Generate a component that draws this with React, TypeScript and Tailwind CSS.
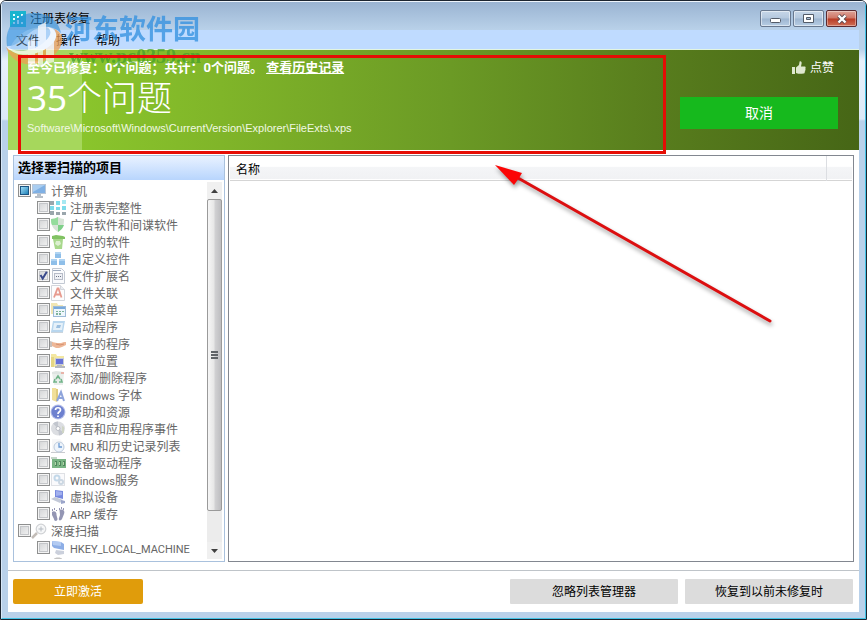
import type { ReactNode } from "react";

const uiFont = "font-['Roboto','Noto_Sans_CJK_SC',sans-serif]";

type Entry = { label: string; icon: ReactNode; checked?: boolean };

function Icon({ children }: { children: ReactNode }) {
  return (
    <svg viewBox="0 0 16 16" className="size-4 shrink-0" aria-hidden="true">
      {children}
    </svg>
  );
}

const computer = (
  <Icon>
    <rect x="1" y="1" width="14" height="10" fill="#b9c6d6" />
    <rect x="2" y="2" width="12" height="8" fill="#7fb0e4" />
    <path d="M2 2h12L2 9z" fill="#a9cdf0" />
    <path d="M6 11h4v2h2v2H4v-2h2z" fill="#b7bfc8" />
  </Icon>
);

const entries: Entry[] = [
  {
    label: "注册表完整性",
    icon: (
      <Icon>
        <path d="M0 1h4v4H0zM0 11h4v4H0zM6 12h4v3H6zM12 12h4v3h-4z" fill="#9aa6ac" />
        <path d="M6 1h4v4H6zM0 6h4v4H0zM6 7h4v3H6zM12 6h4v4h-4z" fill="#7edbea" />
        <path d="M12 0h4v4h-4z" fill="#a6e8f2" />
      </Icon>
    ),
  },
  {
    label: "广告软件和间谍软件",
    icon: (
      <Icon>
        <path d="M1 2c3 0 5-1 7-2 2 1 4 2 6 2 0 6-1 10-6 13C3 12 1 8 1 2z" fill="#d7e3d7" />
        <path d="M8 0C6 1 4 2 1 2c0 2 0 4 1 6h6z" fill="#94dc9c" />
        <path d="M8 8h6c-1 3-3 5-6 7z" fill="#7fd089" />
      </Icon>
    ),
  },
  {
    label: "过时的软件",
    icon: (
      <Icon>
        <path d="M3 5h10l-1 10H5z" fill="#a8d88c" />
        <path d="M2 2l4-1 7 1 2 1v2H2z" fill="#81c263" />
        <path d="M6 7h4l1 3-3 2-3-2z" fill="#dcefd0" />
      </Icon>
    ),
  },
  {
    label: "自定义控件",
    icon: (
      <Icon>
        <path d="M5 1h6v6H5zM1 8h6v6H1zM9 8h6v6H9z" fill="#8fbfe9" />
        <path d="M5 1h6v2H5zM1 8h6v2H1zM9 8h6v2H9z" fill="#b0d4f2" />
      </Icon>
    ),
  },
  {
    label: "文件扩展名",
    checked: true,
    icon: (
      <Icon>
        <path d="M2.500 .5h9l3 3v12h-12z" fill="#fafbfd" stroke="#c3c9d3" />
        <path d="M3 2h8v1H3z" fill="#9daabd" />
        <rect x="4.500" y="5.500" width="8" height="6" fill="#eef0f5" stroke="#b7bcc8" />
        <path d="M6 8h1v1H6zM8 8h1v1H8zM10 8h1v1h-1z" fill="#6c7484" />
      </Icon>
    ),
  },
  {
    label: "文件关联",
    icon: (
      <Icon>
        <path d="M1.500 .5h9l4 4v11h-13z" fill="#fdfdfd" stroke="#d3d6dc" />
        <path d="M10.500 .5v4h4" fill="#e9ecf1" stroke="#d3d6dc" />
        <path d="M4 12.500l3.500-9h1l3 9M5.500 9.500h5" fill="none" stroke="#e79a8e" strokeWidth="1.800" />
      </Icon>
    ),
  },
  {
    label: "开始菜单",
    icon: (
      <Icon>
        <path d="M1 1h6l1 2h5v9H1z" fill="#f1e6b4" />
        <rect x="3.500" y="4.500" width="12" height="10" fill="#eef6fc" stroke="#9dbbd8" />
        <path d="M4 5h11v2H4z" fill="#78a9dd" />
        <path d="M6 9h2v1H6zM9 9h2v1H9zM12 9h2v1h-2zM6 11h2v2H6zM9 11h2v2H9z" fill="#7eb39b" />
      </Icon>
    ),
  },
  {
    label: "启动程序",
    icon: (
      <Icon>
        <path d="M3 2h12l-2 11H1z" fill="#b8d6ee" />
        <path d="M4 4h9l-1 7H3z" fill="#e6f1f9" />
        <path d="M7 6h4l-1 3H6z" fill="#9dc0e0" />
        <path d="M1 13h12v1H1z" fill="#cbd4dc" />
      </Icon>
    ),
  },
  {
    label: "共享的程序",
    icon: (
      <Icon>
        <path d="M0 5l3 1-1 5H0z" fill="#c8c0bc" />
        <path d="M2 6l5 1 4 0 3-1 2 0v3l-4 2-3 1H6L2 10z" fill="#eeb797" />
        <path d="M6 8l4 1 4-1" fill="none" stroke="#d59070" />
      </Icon>
    ),
  },
  {
    label: "软件位置",
    icon: (
      <Icon>
        <path d="M1 1h5l1 2h7v11H1z" fill="#f3e7a2" />
        <path d="M1 4h3v10H1z" fill="#e5d684" />
        <rect x="5.500" y="5.500" width="8" height="6" fill="#6873d8" stroke="#c9ccd6" />
        <path d="M7 12h5v1h3v2H5v-2h2z" fill="#b5b8c0" />
      </Icon>
    ),
  },
  {
    label: "添加/删除程序",
    icon: (
      <Icon>
        <path d="M2 3h12l-1 12H4z" fill="#e9eeeb" />
        <path d="M2 2l4-1 8 1v2H2z" fill="#dfe5e2" />
        <path d="M6 9l2-3 2 3M11 9l1 3H9M7 12H4l1-3" fill="none" stroke="#71b489" strokeWidth="1.600" />
        <path d="M11 2h3v2h-3z" fill="#e9b3a9" />
      </Icon>
    ),
  },
  {
    label: "Windows 字体",
    icon: (
      <Icon>
        <path d="M2 1h4l1 2v12l-5-2z" fill="#f1df99" />
        <path d="M6 2h2v10l-2 3z" fill="#e0cb7c" />
        <path d="M7 14L11 5l3 9M9 11h4" fill="none" stroke="#8ea4db" strokeWidth="2" />
      </Icon>
    ),
  },
  {
    label: "帮助和资源",
    icon: (
      <Icon>
        <circle cx="8" cy="8" r="7.500" fill="#b9c2ea" />
        <circle cx="8" cy="8" r="6.500" fill="#6d80cf" />
        <path d="M5.500 6c0-3 5-3 5 0 0 2-2.500 1.500-2.500 4M8 11.500v1.500" fill="none" stroke="#fff" strokeWidth="1.700" />
      </Icon>
    ),
  },
  {
    label: "声音和应用程序事件",
    icon: (
      <Icon>
        <circle cx="8" cy="7.500" r="7" fill="#dcdee2" />
        <path d="M8 7.500L3 2.500a7 7 0 0 1 5-2zM8 7.500l6 4a7 7 0 0 1-5 3z" fill="#c2c6ce" />
        <circle cx="8" cy="7.500" r="2" fill="#fff" stroke="#b9bcc4" />
        <path d="M12 5v7h2V6z" fill="#cfd5c5" />
      </Icon>
    ),
  },
  {
    label: "MRU 和历史记录列表",
    icon: (
      <Icon>
        <path d="M2 1h8l3 3v11H2z" fill="#f7f7f8" />
        <path d="M1 14.500h14" stroke="#c9cbcf" />
        <circle cx="9" cy="9" r="5" fill="#eef4fb" stroke="#bdcbdc" />
        <path d="M9 5v4h3" fill="none" stroke="#6c9bd4" strokeWidth="1.300" />
      </Icon>
    ),
  },
  {
    label: "设备驱动程序",
    icon: (
      <Icon>
        <path d="M1 2h6v2H1z" fill="#c5d4c9" />
        <path d="M2 4h14v9H2z" fill="#79b584" />
        <path d="M5 6h2v5H5zM9 6h2v5H9zM13 6h2v5h-2z" fill="#4e865c" />
        <path d="M5 7h1v3H5zM9 7h1v3H9zM13 7h1v3h-1z" fill="#b3d5a9" />
      </Icon>
    ),
  },
  {
    label: "Windows服务",
    icon: (
      <Icon>
        <rect x="1.500" y="1.500" width="13" height="12" fill="#fafafc" stroke="#dfe1e5" />
        <circle cx="7" cy="6" r="2.500" fill="none" stroke="#c3d8e9" strokeWidth="2" />
        <circle cx="11" cy="10" r="2" fill="none" stroke="#cbd7e2" strokeWidth="2" />
      </Icon>
    ),
  },
  {
    label: "虚拟设备",
    icon: (
      <Icon>
        <path d="M5 1l8 1v8l-8-2z" fill="#7789df" />
        <path d="M6 2l6 1v3L6 7z" fill="#a2b0ee" />
        <path d="M1 10l4-2 8 3-3 3z" fill="#c3c9d8" />
        <path d="M11 11l4 1v2l-4 1z" fill="#9ba5ca" />
      </Icon>
    ),
  },
  {
    label: "ARP 缓存",
    icon: (
      <Icon>
        <path d="M2 6c2-2 5 0 4.500 3l1 4c0 2.500-3.500 2.500-3.500 0L2 9zM9.500 4c3-1.500 6 1 4.500 4l-2 5c-1 2-4 2-3-1l1-3z" fill="#9496b4" />
        <path d="M2 3h1v2H2zM4 2h1v2H4zM6 4h1v1H6zM9 2h1v2H9zM11 1h1v2h-1zM13 2h1v2h-1z" fill="#9496b4" />
      </Icon>
    ),
  },
];

const magnifier = (
  <Icon>
    <path d="M6 10l-5 5" stroke="#c3bdb8" strokeWidth="2.500" />
    <circle cx="10" cy="6" r="4.800" fill="#f6f7f8" stroke="#d0d2d5" strokeWidth="1.200" />
    <path d="M10 3.500v5M7.500 6h5" stroke="#b4bac1" />
  </Icon>
);

const registry = (
  <Icon>
    <path d="M2 1l9 1 3 2v6L4 8 2 6z" fill="#8daee6" />
    <path d="M2 1l9 1v4L3 5z" fill="#b3cbf2" />
    <path d="M6 10l8 1v3l-6 1-3-2z" fill="#cbd0dc" />
  </Icon>
);

const boxClass =
  "size-[13px] shrink-0 appearance-none border border-[#8e8f8f] bg-[linear-gradient(135deg,#cfd1d3,#f6f6f6)] shadow-[inset_0_0_0_1px_#f4f4f4,inset_0_0_0_2px_#c4c6c9]";

/* Latin runs are set one size below the Chinese text around them. */
function MixedText({ text }: { text: string }) {
  return text
    .split(/([A-Za-z_]+)/)
    .filter(Boolean)
    .map((run) =>
      /^[A-Za-z_]/.test(run) ? (
        <span key={run} className="text-[11px]">
          {run}
        </span>
      ) : (
        run
      ),
    );
}

function TreeRow({ label, icon, checked, root, mixed }: Entry & { root?: boolean; mixed?: boolean }) {
  return (
    <li className={root ? "flex h-[17px] items-center" : "flex h-[17px] items-center pl-[19px]"}>
      <label className="flex items-center whitespace-nowrap">
        <span className="grid">
          <input type="checkbox" defaultChecked={checked} className={`${boxClass} col-start-1 row-start-1`} />
          {checked && (
            <svg viewBox="0 0 13 13" className="pointer-events-none col-start-1 row-start-1 size-[13px]" aria-hidden="true">
              <path d="M3.500 6l2.200 3.500L9.800 2.800" fill="none" stroke="#3a4a8c" strokeWidth="2" />
            </svg>
          )}
          {mixed && (
            <span className="pointer-events-none col-start-1 row-start-1 m-[2px] border border-[#1c5583] bg-linear-to-br from-[#9bdcf6] to-[#1583b8]" />
          )}
        </span>
        {icon}
        <span className="pt-1 pl-1">
          <MixedText text={label} />
        </span>
      </label>
    </li>
  );
}

function ScrollArrow({ up }: { up?: boolean }) {
  return (
    <button
      type="button"
      aria-label={up ? "向上滚动" : "向下滚动"}
      className="flex h-[17px] shrink-0 items-center justify-center bg-[#f0f0f0]"
    >
      <svg viewBox="0 0 7 4" className="h-1 w-[7px]" aria-hidden="true">
        <path d={up ? "M0 4L3.500 0 7 4z" : "M0 0h7L3.500 4z"} fill="#404040" />
      </svg>
    </button>
  );
}

function WindowButton({ label, close, children }: { label: string; close?: boolean; children: ReactNode }) {
  return (
    <button
      type="button"
      aria-label={label}
      className={
        close
          ? "flex h-[17px] w-[31px] items-center justify-center rounded-[2px] border border-[#5b2a30] bg-[linear-gradient(#dda398,#cf7565_48%,#b83a24_52%,#cf6f55)] shadow-[inset_0_0_0_1px_#ffffff60]"
          : "flex h-[17px] w-[31px] items-center justify-center rounded-[2px] border border-[#68788f] bg-[linear-gradient(#c6d6e8,#b4c8de_48%,#9db5d0_52%,#b7cde4)] shadow-[inset_0_0_0_1px_#ffffff80]"
      }
    >
      {children}
    </button>
  );
}

function TitleBar() {
  return (
    <header className="flex h-7 items-start justify-between bg-linear-to-b from-[#9ab4d2] to-[#b9d1e9] pr-2 pl-2">
      <div className="flex items-center gap-1 pt-2">
        <svg viewBox="0 0 16 16" className="size-4" aria-hidden="true">
          <rect width="16" height="16" fill="#19b4cf" />
          <path d="M3 3h2v2H3zM3 7h2v2H3zM3 11h2v2H3zM7 5h2v2H7zM7 9h2v4H7zM11 11h2v2h-2zM11 3h2v2h-2z" fill="#e4fbff" />
        </svg>
        <h1 className="text-[12px] leading-[18px]">注册表修复</h1>
      </div>
      <div className="flex gap-[2px] pt-2">
        <WindowButton label="最小化">
          <svg viewBox="0 0 11 5" className="mt-1 h-[5px] w-[11px]" aria-hidden="true">
            <rect x=".5" y=".5" width="10" height="4" rx="1" fill="#fff" stroke="#535b68" />
          </svg>
        </WindowButton>
        <WindowButton label="最大化">
          <svg viewBox="0 0 11 9" className="h-[9px] w-[11px]" aria-hidden="true">
            <path d="M.5.5h10v8H.5zM3.500 3.500h4v2h-4z" fill="#fff" fillRule="evenodd" stroke="#535b68" />
          </svg>
        </WindowButton>
        <WindowButton label="关闭" close>
          <svg viewBox="0 0 12 10" className="h-[10px] w-3" aria-hidden="true">
            <path d="M2.500 1.500l7 7M9.500 1.500l-7 7" stroke="#5a4a50" strokeWidth="4" />
            <path d="M2.500 1.500l7 7M9.500 1.500l-7 7" stroke="#fff" strokeWidth="2.400" />
          </svg>
        </WindowButton>
      </div>
    </header>
  );
}

function Banner() {
  return (
    <section className="flex h-[100px] justify-between bg-[linear-gradient(90deg,#a6d75c_0,#a6d75c_74px,#8ac52c_74px,#80b529_25%,#6b9a25_52%,#587d1d_76%,#466616)] pr-[21px] pl-[19px] text-white">
      <div className="pt-[9px]">
        <p className="text-[13px] leading-[18px] font-bold">
          至今已修复：0个问题；共计：0个问题。{" "}
          <a href="#history" className="underline">
            查看历史记录
          </a>
        </p>
        <p className="font-['Noto_Sans','Noto_Sans_CJK_SC',sans-serif] text-[35px] leading-[42px] font-light">
          <span className="font-normal">35</span>个问题
        </p>
        <p className="font-['Liberation_Sans',sans-serif] text-[11px] leading-[18px] text-[#f1f8e4]">
          Software\Microsoft\Windows\CurrentVersion\Explorer\FileExts\.xps
        </p>
      </div>
      <div className="flex w-[158px] shrink-0 flex-col gap-5 pt-[9px]">
        <button type="button" className="flex items-center gap-1 self-end pr-1 text-[12px] leading-[18px]">
          <svg viewBox="0 0 14 14" className="size-[14px]" fill="#dfe8cf" aria-hidden="true">
            <path d="M0 6h3v7H0zM4 6.500L7 4l.6-3.500c1.600-.6 2.200.8 2 2L9 5.500h3.500c1.200 0 1.400 1.200.8 1.800.5.600.4 1.400-.2 1.700.4.700.2 1.400-.4 1.700.2 1-.2 1.600-1.200 1.800-2.500.6-5 .5-7.500-.5z" />
          </svg>
          点赞
        </button>
        <button type="button" className="h-8 bg-[#16b91d] text-[14px] leading-5">
          取消
        </button>
      </div>
    </section>
  );
}

function ScanPanel() {
  return (
    <section className="flex w-[212px] shrink-0 flex-col border border-[#a9c1dd]">
      <h2 className="h-6 bg-linear-to-b from-[#e9f2ff] to-[#b8d5fd] pl-1 text-[13px] leading-[23px] font-bold">
        选择要扫描的项目
      </h2>
      <div className="flex flex-1 py-[2px] pr-[2px] pl-1">
        <ul className="min-w-0 flex-1 overflow-hidden text-[12px] leading-[17px] text-[#666]">
          <TreeRow root mixed label="计算机" icon={computer} />
          {entries.map((entry) => (
            <TreeRow key={entry.label} {...entry} />
          ))}
          <TreeRow root label="深度扫描" icon={magnifier} />
          <TreeRow label="HKEY_LOCAL_MACHINE" icon={registry} />
          <li className="h-[3px] overflow-hidden pl-8" aria-hidden="true">
            <Icon>
              <path d="M4 3c0-2 8-2 8 0z" fill="#c4c4c4" />
            </Icon>
          </li>
        </ul>
        <div className="flex w-[15px] flex-col bg-[#ececec]">
          <ScrollArrow up />
          <div className="flex flex-10 flex-col items-center justify-center gap-px rounded-[2px] border border-[#9a9a9a] bg-[linear-gradient(90deg,#f6f6f6,#e6e6e6_48%,#d2d2d4_52%,#bdbdc0)]">
            <span className="h-[2px] w-[7px] bg-[#606468]" />
            <span className="h-[2px] w-[7px] bg-[#606468]" />
            <span className="h-[2px] w-[7px] bg-[#606468]" />
          </div>
          <div className="flex-1" />
          <ScrollArrow />
        </div>
      </div>
    </section>
  );
}

function Results() {
  return (
    <section className="min-w-0 flex-1 border border-[#828790] px-px">
      <table className="w-full table-fixed text-left text-[12px]">
        <thead>
          <tr className="h-6 border-b border-[#d5d5d5] bg-[linear-gradient(#fff_45%,#f4f5f7_50%,#f1f2f4)]">
            <th scope="col" className="border-r border-[#dcdee2] pt-1 pb-0 pl-[6px] leading-[18px] font-normal">
              名称
            </th>
            <td className="w-[26px]" />
          </tr>
        </thead>
      </table>
    </section>
  );
}

/* Site watermark laid over the window's top left corner. */
function Watermark() {
  return (
    <div className="pointer-events-none absolute top-[11px] left-1 flex opacity-75">
      <svg viewBox="0 0 60 60" className="size-[60px]" aria-hidden="true">
        <path d="M2 34C-1 15 12 1 29 1c14 0 25 8 27 20C46 12 34 14 26 20 16 27 12 35 2 34z" fill="#2f8fd8" fillOpacity=".8" />
        <path d="M5 37C8 26 24 12 42 16c8 2 10 7 6 13-6 10-26 18-43 8z" fill="#8fc4ee" fillOpacity=".5" />
        <path d="M1 35c5 14 17 20 32 16 16-4 25-15 24-25-1-5-4-8-8-9 4 5 0 14-11 21-12 7-27 7-37-3z" fill="#f0a052" />
        <path d="M1 34c9 11 25 11 38 4 11-6 16-15 9-21-2-1-4-2-6-2 6 4 4 10-5 17-10 7-26 10-36 2z" fill="#fff" />
        <path d="M23 30l7-4v28l-7 3zM33 14l8-4v18l8-3v25l-8 2V33l-3 2v19l-5 1z" fill="#fff" fillOpacity=".85" />
      </svg>
      <div>
        <p className="text-[27px] leading-[36px] font-bold text-[#2f8fe0]">河东软件园</p>
        <p className="pl-1 font-['Liberation_Serif',serif] text-[20px] leading-4 font-bold text-[#46a02c]">
          www.pc0359.cn
        </p>
      </div>
    </div>
  );
}

/* Red frame and arrow that point out the scan status. */
function Callout() {
  return (
    <>
      <div className="pointer-events-none absolute top-[54px] left-[17px] h-[99px] w-[648px] border-3 border-[#e60d05]" />
      <svg
        viewBox="0 0 290 170"
        className="pointer-events-none absolute top-[159px] left-[489px] h-[170px] w-[290px] drop-shadow-[1px_3px_2px_#00000060]"
        aria-hidden="true"
      >
        <path d="M28 18l252 143" stroke="#dc0f10" strokeWidth="3" strokeLinecap="round" />
        <path d="M5 5l27 8-3 5-5 7z" fill="#fb0505" />
      </svg>
    </>
  );
}

export default function App() {
  return (
    <div
      className={`${uiFont} relative flex min-h-screen flex-col rounded-t-[6px] border border-[#1c2530] bg-[linear-gradient(#b9d1ea_48px,#e8f1fb_60px,#dce9f7_118px,#b9d1ea_120px)] text-black`}
    >
      <div className="flex flex-1 flex-col rounded-t-[5px] border border-t-[#eef5fc] border-r-[#43c3e6] border-b-[#43c3e6] border-l-[#d8e8f8]">
        <TitleBar />
        <div className="flex flex-1 flex-col px-[6px] pb-[6px]">
          <nav className="flex h-5 gap-4 border-b border-[#e3f5e0] bg-[#bfdbff] pl-2 text-[12px] leading-5">
            <button type="button" className="pt-px">文件</button>
            <button type="button" className="pt-px">操作</button>
            <button type="button" className="pt-px">帮助</button>
          </nav>
          <Banner />
          <main className="flex flex-1 flex-col bg-white">
            <div className="flex flex-1 gap-[3px] px-[5px] pt-[5px] pb-2">
              <ScanPanel />
              <Results />
            </div>
            <footer className="flex h-[42px] items-start gap-[7px] border-t border-[#bfc4c9] pt-2 pr-[6px] pl-[5px] text-[12px] leading-4">
              <button type="button" className="mr-auto h-[25px] w-[130px] rounded-[2px] bg-[#e09c0b] pt-px text-white">
                立即激活
              </button>
              <button type="button" className="h-[25px] w-[168px] rounded-[1px] bg-[#dcdcdc] pt-px">
                忽略列表管理器
              </button>
              <button type="button" className="h-[25px] w-[168px] rounded-[1px] bg-[#dcdcdc] pt-px">
                恢复到以前未修复时
              </button>
            </footer>
          </main>
        </div>
      </div>
      <Watermark />
      <Callout />
    </div>
  );
}
